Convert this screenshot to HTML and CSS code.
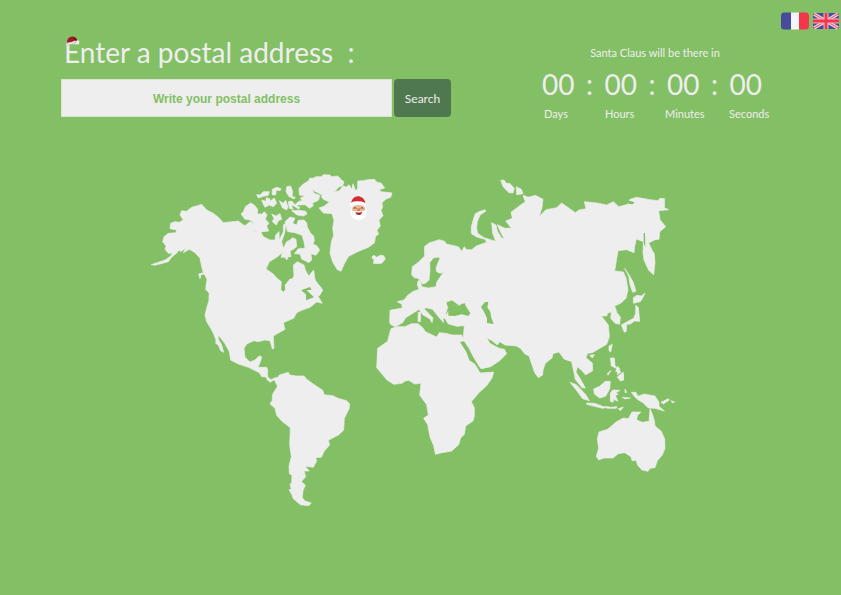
FILE: index.html
```html
<!DOCTYPE html>
<html lang="en">
<head>
<meta charset="utf-8">
<meta name="viewport" content="width=device-width, initial-scale=1">
<title>Santa Claus tracker</title>
<link rel="stylesheet" href="styles.css">
</head>
<body>
<nav class="languages" aria-label="Language">
  <a href="#fr" aria-label="Français">
    <svg class="flag" viewBox="0 0 28 18">
      <path fill="#464b9b" d="M10 0.500H3Q0 .5 0 4V14Q0 17.500 3 17.500H10Z"/>
      <path fill="#f5f5f5" d="M10 .5H18V17.500H10Z"/>
      <path fill="#f4364c" d="M18 .5H25Q28 .5 28 4V14Q28 17.500 25 17.500H18Z"/>
    </svg>
  </a>
  <a href="#en" aria-label="English">
    <svg class="flag" viewBox="0 0 28 18">
      <rect x="0" y="1" width="26" height="16" rx="2" fill="#464b9b"/>
      <path stroke="#f5d5dd" stroke-width="3.400" d="M1 2 25 16M25 2 1 16"/>
      <path stroke="#f06078" stroke-width="1.200" d="M1 2 25 16M25 2 1 16"/>
      <path stroke="#f5b5c0" stroke-width="5" d="M13 1V17M0 9H26"/>
      <path stroke="#f4364c" stroke-width="2.800" d="M13 1V17M0 9H26"/>
    </svg>
  </a>
</nav>
<header class="top">
  <form class="search">
    <h1 class="title"><label for="address">Enter a postal address&nbsp; :</label>
      <svg class="hat" viewBox="0 0 45 32">
        <path fill="#a51a20" d="M5 20Q8 1 22 1Q34 2 37 12L32 20Z"/>
        <path fill="#6d1017" d="M25 3Q34 5 37 13L30 16Z"/>
        <path fill="#f2eeee" stroke="#8d7770" d="M2 27Q4 20 12 19Q22 18 30 13L35 17Q29 22 19 24Q10 25 6 30Z"/>
        <circle cx="38" cy="17" r="5" fill="#eee"/>
      </svg>
    </h1>
    <div class="fields">
      <input class="address" id="address" type="text" placeholder="Write your postal address">
      <button class="submit" type="submit">Search</button>
    </div>
  </form>
  <section class="countdown">
    <p class="caption">Santa Claus will be there in</p>
    <div class="clock">
      <span>00</span><span>:</span><span>00</span><span>:</span><span>00</span><span>:</span><span>00</span>
    </div>
    <div class="units"><span>Days</span><span>Hours</span><span>Minutes</span><span>Seconds</span></div>
  </section>
</header>
<main>
<svg class="map" viewBox="-450 0 2523 1020" role="img" aria-label="World map">
  <g class="land">
    <!-- Alaska and Canada -->
    <g transform="translate(-30 0)">
      <path d="M34 284 75 270 90 260 98 250 85 250 75 238 78 228 68 215 72 200 85 190 108 188 110 180 90 176 92 160 105 155 118 157 130 150 120 135 125 122 140 124 155 112 172 107 185 103 200 120 220 130 235 142 250 158 295 153 310 165 325 168 338 180 350 187 362 185 370 200 390 210 405 210 407 195 417 185 418 210 430 185 430 165 437 160 435 185 425 215 430 235 440 215 450 210 458 203 468 208 470 230 460 238 450 243 453 260 445 260 440 270 435 262 423 262 427 248 410 262 388 275 378 297 400 312 420 337 421 358 430 367 438 360 436 345 455 330 462 318 460 285 472 275 492 285 496 300 506 318 521 300 525 330 547 358 540 375 520 390H208L208 360 198 350 202 330 193 312 183 314 180 326 176 312 190 308 185 290 180 265 165 248 148 238 130 248 137 235 122 245 118 240 107 252 95 262 85 275 45 286Z"/>
      <!-- Arctic islands -->
      <path d="M303 132 310 125 316 110 332 99 343 105 353 118 352 132 366 132 373 125 381 134 376 148 387 160 380 168 386 183 368 185 358 189 345 182 330 178 318 165 330 155 346 162 330 150 315 148ZM350 74 360 75 370 65 388 65 385 76 370 79 355 84ZM397 58 410 52 423 56 420 62 409 60 407 75 396 74ZM365 90 378 94 379 83 389 86 391 93 403 84 410 100 400 110 387 105 375 112 370 103ZM395 132 408 138 420 131 425 148 415 152 409 165 397 155 402 145ZM440 50 452 48 458 65 456 80 466 82 462 87 446 79 438 65ZM418 92 430 100 437 91 444 110 440 120 427 113ZM445 95 455 93 465 104 480 92 483 100 470 106 480 113 475 117 462 108 453 106 460 118 448 115ZM455 122 478 121 497 124 501 132 490 138 471 135ZM435 155 450 141 465 145 458 160 470 165 475 151 492 150 500 158 502 171 512 190 521 198 523 212 519 222 530 227 539 240 528 256 513 251 515 270 507 278 485 267 480 252 463 251 475 236 495 235 492 215 486 196 465 188 443 185ZM333 196 350 188 352 202Z"/>
    </g>
    <!-- Ellesmere, Greenland and Iceland -->
    <g transform="translate(240 -15)">
      <path d="M207 70 220 57 235 48 240 39 248 40 258 35 274 35 280 29 300 30 305 35 322 33 329 38 333 44 342 50 338 62 326 66 316 78 302 83 285 86 270 88 266 105 247 115 250 122 239 130 225 119 205 120 200 115 216 106 211 99 225 93 208 90Z"/>
      <path d="M267 129 282 124 298 111 280 103 274 95 277 86 306 82 328 77 339 63 349 66 357 59 365 73 369 56 377 78 383 70 383 48 400 47 413 44 434 43 438 50 454 55 464 69 448 74 453 80 471 82 486 84 482 97 468 102 456 113 458 127 453 136 459 152 447 165 451 183 441 196 446 207 437 214 433 234 415 247 383 260 356 274 344 294 333 319 322 314 308 291 300 264 304 230 311 211 308 190 312 166 306 146 280 144Z"/>
      <path d="M425 276 432 271 440 277 450 271 461 272 466 282 455 295 441 296 430 295 432 286Z"/>
    </g>
    <!-- United States and Central America -->
    <path transform="translate(120 330)" d="M52-5 261-5 274 5 272 30 280 38 287 28 286 15 300-3 375-3 378 15 398 32 390 42 372 48 385 50 397 70 380 66 360 82 335 91 320 98 311 115 280 128 285 148 250 168 252 205 247 207 240 182 225 180 205 185 192 182 170 192 162 205 165 232 180 246 195 240 207 228 215 230 212 243 204 262 230 262 233 270 233 290 243 299 258 292 265 296 258 303 249 301 241 307 231 299 228 291 215 290 208 278 175 262 145 252 122 240 118 215 104 190 85 165 85 177 95 195 101 217 92 212 85 195 77 190 78 180 70 160 62 145 50 125 45 105 50 85 57 60 58 40 47 28Z"/>
    <!-- South America -->
    <path transform="translate(300 585)" d="M80 42 88 30 101 26 115 22 119 30 140 33 162 33 170 43 190 57 218 76 223 89 248 92 264 100 290 107 299 117 297 132 283 160 281 195 267 209 235 226 239 240 223 258 214 277 197 278 200 288 190 307 165 304 178 318 162 318 167 335 154 350 166 360 159 377 157 398 165 408 184 414 176 422 151 419 130 401 126 390 117 374 124 373 120 358 125 353 126 331 118 326 117 303 124 275 119 239 121 188 95 168 80 151 75 130 60 117 67 106 67 89 83 63 76 52Z"/>
    <!-- Africa -->
    <path transform="translate(645 420)" d="M75 65 78 56 96 50 120 50 139 41 159 41 174 54 181 65 215 81 223 68 242 70 262 75 290 75 302 109 315 142 331 165 346 189 386 186 381 204 365 227 343 247 319 275 328 293 328 319 324 333 302 348 298 373 287 384 281 404 260 423 232 428 211 433 206 407 195 381 188 344 176 325 190 315 185 284 164 255 168 220 149 222 131 211 119 214 111 220 86 223 66 210 35 173 38 115 68 94Z"/>
    <!-- Europe and Asia -->
    <path d="M935 244 943 230 950 239 965 239 979 228 1010 217 1005 208 980 201 964 191 964 170 971 145 976 131 990 124 1005 119 1007 124 990 135 982 155 980 175 983 190 1002 203 1037 214 1028 190 1025 158 1038 165 1042 183 1054 203 1063 206 1055 193 1042 164 1065 175 1084 174 1067 153 1087 145 1083 127 1113 104 1127 95 1119 78 1142 83 1156 76 1179 88 1176 112 1168 139 1188 119 1220 113 1235 99 1276 128 1287 120 1308 116 1303 95 1341 99 1370 105 1390 95 1406 110 1434 103 1438 89 1459 82 1500 89 1524 92 1530 85 1544 86 1543 113 1556 119 1526 122 1530 149 1547 170 1529 185 1527 208 1515 209 1496 219 1506 240 1513 252 1515 278 1511 314 1496 301 1482 270 1479 250 1480 215 1459 207 1454 230 1452 248 1430 239 1404 242 1394 303 1420 306 1428 324 1434 360 1428 385 1413 399 1394 408 1401 428 1411 441 1409 463 1395 460 1382 445 1384 425 1373 430 1370 438 1354 438 1375 465 1378 500 1370 523 1327 548 1313 550 1308 563 1327 579 1328 602 1307 615 1296 602 1282 590 1278 607 1290 625 1303 650 1288 638 1273 613 1265 575 1242 567 1227 546 1209 551 1206 564 1186 580 1179 600 1178 615 1165 623 1154 608 1137 558 1125 552 1111 535 1099 528 1065 525 1049 515 1042 525 1026 512 1010 503 1020 520 1047 535 1063 538 1070 551 1049 572 1022 590 994 597 984 585 962 550 942 517 937 511 940 500 943 467 920 469 894 461 885 445 894 425 903 416 900 410 928 406 906 390 888 397 893 413 887 430 893 447 879 444 881 458 865 440 848 418 828 413 823 417 837 431 849 444 846 458 840 447 818 434 807 418 790 429 766 444 759 457 742 467 735 470 721 463 719 455 720 421 757 414 755 402 741 395 762 390 773 376 788 365 807 358 802 345 804 333 811 331 815 350 836 354 858 350 860 337 880 307 870 310 860 305 858 295 863 281 870 265 864 261 850 264 839 278 840 301 837 330 826 340 817 342 811 330 801 324 793 323 785 315 787 290 805 277 824 258 823 230 837 219 868 209 884 214 889 222 925 230Z"/>
    <!-- Severnaya Zemlya -->
    <g transform="translate(930 0)">
      <path d="M122 31 132 30 139 40 149 40 163 55 159 69 147 68 130 51ZM169 50 184 58 189 71 170 74ZM192 75 202 83 222 77 217 94 196 97Z"/>
    </g>
    <!-- Sakhalin, Japan and the Philippines -->
    <g transform="translate(990 270)">
      <path d="M434 25 446 43 459 65 468 94 458 97 450 74 446 48ZM460 113 471 106 484 108 495 99 487 116 481 125 460 130ZM467 136 475 142 479 184 463 183 450 193 440 192 439 214 433 217 424 195 445 183 461 175 467 160ZM387 258 397 253 392 276 387 272ZM391 294 403 294 405 316 416 332 409 325 394 318Z"/>
      <path d="M329 286 343 284 337 294ZM382 341 393 331 384 346ZM413 328 423 336 412 344ZM411 352 430 337 431 359 424 361Z"/>
    </g>
    <!-- Italian islands -->
    <path d="M805 427 812 426 811 455 804 454Z"/>
    <!-- Indonesia and Oceania -->
    <g transform="translate(1230 510)">
      <path d="M30 127 49 134 65 151 78 165 88 182 68 176 50 152ZM43 85 52 107 63 122 76 144 66 143 45 117ZM80 189 103 190 118 195 139 203 127 205 80 193ZM135 199 153 202 171 200 169 205 141 205ZM175 206 190 201 181 212ZM101 147 119 139 136 124 151 124 149 147 137 169 119 174 103 162ZM151 160 158 150 180 151 166 160 175 162 166 167 174 184 161 178 159 187 151 184ZM195 147 200 157 195 158ZM187 172 211 174 195 177ZM214 157 228 157 233 169 252 162 285 168 297 187 297 199 313 213 285 205 265 204 249 188 235 180 224 170ZM303 187 325 176 328 180 310 192ZM333 182 344 186 337 188ZM176 108 188 98 191 120 180 123ZM173 79 180 88 176 96 167 94Z"/>
      <path d="M109 349 116 325 112 297 117 276 143 268 168 246 190 234 205 236 216 216 243 216 232 227 230 240 247 247 267 244 270 206 278 225 284 246 285 258 304 274 314 297 315 325 307 345 292 362 285 383 270 385 264 394 246 390 233 376 228 361 216 362 213 350 194 338 175 341 159 354 132 354 116 360Z"/>
    </g>
  </g>
  <!-- Inland seas, bays and straits -->
  <g class="water">
    <path d="M895 417 900 407 915 406 930 406 945 404 961 430 955 438 935 433 915 438 895 437ZM932 402 946 400 945 408 935 411Z"/>
    <path d="M993 411 1005 396 1015 396 1012 412 1021 426 1024 443 1031 462 1011 459 1011 445 1002 425Z"/>
    <path d="M930 516 942 514 956 535 971 564 984 585 989 605 1030 603 1023 594 990 598 977 583 958 571 949 546Z"/>
    <path d="M453 361 480 351 485 359 470 361 492 382 468 391 468 373Z"/>
    <path d="M482 51 490 63 508 71 510 75 493 69Z"/>
    <path d="M1432 91 1454 97 1448 103 1436 102Z"/>
    <path d="M1481 190 1485 188 1486 231 1481 218Z"/>
  </g>
  <!-- Santa -->
  <g transform="translate(599 79)">
    <path fill="#fff" stroke="#eadfd8" d="M2 37Q-3 63 17 71 35 76 49 61 58 38 46 28Z"/>
    <ellipse cx="27" cy="39" rx="20" ry="14" fill="#efb693"/>
    <path fill="#d52a33" d="M4 20Q9-2 28 0 45 3 48 24L25 21Z"/>
    <path fill="#fff" d="M1 25Q3 14 25 15 50 16 51 27L44 30Q26 22 6 30Z"/>
    <path fill="#fff" d="M7 43Q20 46 26 43 36 48 46 42L43 60Q27 72 11 59Z"/>
    <path stroke="#594842" stroke-width="3" fill="none" d="M12 36Q16 32 20 36M33 36Q37 32 41 36"/>
    <circle cx="27" cy="40" r="5" fill="#dc8060"/>
    <path fill="#aa2930" d="M17 47Q27 51 38 46 35 56 27 56 19 56 17 47Z"/>
  </g>
</svg>
</main>
</body>
</html>
```
FILE: styles.css
```css
* { box-sizing: border-box; }
body {
  margin: 0;
  background: #83bf64;
  color: #eee;
  font-family: Lato, "Open Sans", sans-serif;
}
.languages {
  display: flex;
  justify-content: flex-end;
  gap: 4px;
  padding-top: 12px;
}
.languages a { display: block; height: 18px; }
.flag { display: block; width: 28px; height: 18px; }
.top {
  display: flex;
  justify-content: space-between;
  align-items: flex-start;
  padding: 4px 72px 0 61px;
}
.search { width: 390px; }
.title {
  position: relative;
  margin: 0;
  padding-left: 3px;
  font-size: 28px;
  line-height: 36px;
  font-weight: 400;
  -webkit-text-stroke: 0;
}
.hat {
  position: absolute;
  left: 4px;
  top: 2px;
  width: 15px;
  height: 11px;
}
.fields {
  display: flex;
  gap: 2px;
  margin-top: 9px;
}
.address {
  flex: 1;
  min-width: 0;
  height: 38px;
  padding: 2px 0 0;
  border: 1px solid #d8e5d0;
  background: #eee;
  color: #83bf64;
  font: bold 12px "Liberation Sans", sans-serif;
  text-align: center;
}
.address::placeholder { color: #83bf64; opacity: 1; }
.submit {
  width: 57px;
  padding: 0;
  border: 0;
  border-radius: 4px;
  background: #50784f;
  color: #eee;
  font: 12px Lato, sans-serif;
}
.countdown { width: 228px; padding-top: 11px; }
.caption {
  margin: 0;
  font-size: 11px;
  line-height: 16px;
  text-align: center;
}
.clock {
  display: flex;
  justify-content: space-between;
  padding: 6px 7px 0 1px;
  font-size: 28px;
  line-height: 34px;
}
.units {
  display: grid;
  grid-template-columns: 61px 60px 64px auto;
  padding: 5px 0 0 3px;
  font-size: 11px;
  line-height: 16px;
}
.map { display: block; width: 100%; height: auto; margin-top: 48px; }
.land { fill: #eee; stroke: #eee; stroke-width: 2; stroke-linejoin: round; }
.water { fill: #83bf64; }
```
